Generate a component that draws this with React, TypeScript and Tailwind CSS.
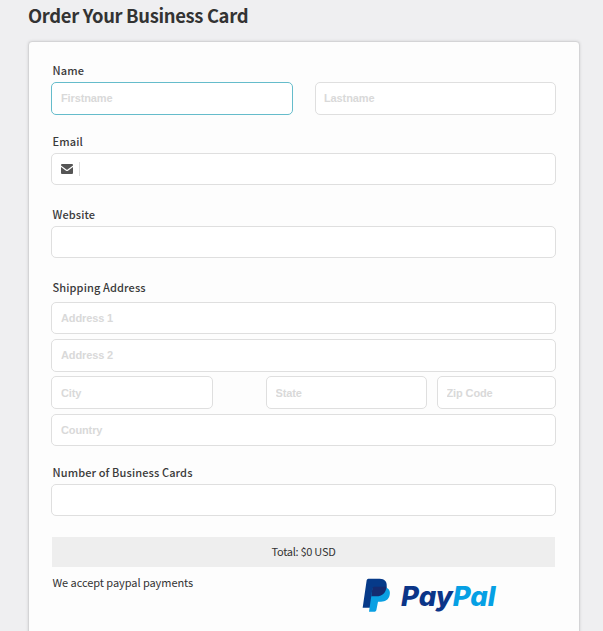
import { clsx } from "clsx";

const sans = "font-['Noto_Sans_CJK_JP',sans-serif]";

function Label({ text, className }: { text: string; className?: string }) {
  return (
    <div className={clsx(sans, "h-5 pl-[1.5px] text-[11px] leading-[18px] font-medium tracking-[0.12px] whitespace-nowrap text-[#3a3a3a]", className)}>
      {text}
    </div>
  );
}

function Field({ placeholder, className }: { placeholder?: string; className?: string }) {
  return (
    <input
      placeholder={placeholder}
      className={clsx(
        "block min-w-0 rounded-[5px] border bg-white font-['Liberation_Sans',Arial,sans-serif] text-[11px] font-bold tracking-[-0.12px] text-[#333] outline-none placeholder:text-[#d9d9d9] placeholder:opacity-100",
        className
      )}
    />
  );
}

function PayPalLogo() {
  return (
    <svg viewBox="36 54 405 105" className="h-[35px] w-[135px]" aria-label="PayPal">
      <path d="M55 56H89C104 56 112 65 110 80C107 100 96 109 79 109H69L64 143H38L50 61Q51 56 55 56Z" fill="#063a89" />
      <path d="M109 83C119 87 121 95 119 105C116 119 106 125 93 125H84L79 151Q78 155 74 155H57L67 87Q68 83 72 83Z" fill="#0aa0e3" />
      <path d="M72 80H110C107 100 96 109 79 109H64L67 85Q68 80 72 80Z" fill="#152b70" />
      <text
        x="153"
        y="138"
        fontSize="80"
        fontFamily="Inter, sans-serif"
        fontWeight="800"
        fontStyle="italic"
        textLength="284"
        lengthAdjust="spacingAndGlyphs"
        fill="#0b3588"
        className="[font-feature-settings:'cv11','ss01']"
      >
        Pay<tspan fill="#06a0e4">Pal</tspan>
      </text>
    </svg>
  );
}

export default function App() {
  return (
    <main className="h-[631px] overflow-hidden bg-[#efeff1]">
      <h1 className={clsx(sans, "h-[41px] pl-7 text-[18.4px] leading-[31px] font-bold tracking-[-0.33px] whitespace-nowrap text-[#333]")}>
        Order Your Business Card
      </h1>
      <section className="ml-7 h-[640px] w-[552px] rounded-[4px] border border-[#d4d4d6] bg-[#fdfdfd] px-[22px] pt-[19px] shadow-[0_0_3px_rgba(0,0,0,0.12)]">
        <div className="w-[505px]">
          <Label text="Name" />
          <div className="mt-px flex justify-between">
            <Field placeholder="Firstname" className="h-[33px] w-[242px] border-[#65bccb] px-[9px] pb-[2px]" />
            <Field placeholder="Lastname" className="h-[33px] w-[241px] border-[#dfdfdf] px-2 pb-[2px]" />
          </div>

          <Label text="Email" className="mt-[17px]" />
          <div className="mt-px flex h-8 items-center rounded-[5px] border border-[#dfdfdf] bg-white pl-[9px]">
            <svg viewBox="0 0 12 10" className="h-[10px] w-3">
              <path d="M1 0H11Q12 0 12 1V1.6L6.6 5.6Q6 6 5.4 5.6L0 1.6V1Q0 0 1 0Z" fill="#555" />
              <path d="M0 3L5 6.7Q6 7.3 7 6.7L12 3V9Q12 10 11 10H1Q0 10 0 9Z" fill="#555" />
            </svg>
            <span className="ml-[6px] h-[14px] w-px bg-[#dcdcdc]" />
          </div>

          <Label text="Website" className="mt-5" />
          <Field className="mt-px h-8 w-full border-[#dfdfdf]" />

          <Label text="Shipping Address" className="mt-5" />
          <div className="mt-1 flex flex-col">
            <Field placeholder="Address 1" className="h-8 w-full border-[#dfdfdf] px-[9px]" />
            <Field placeholder="Address 2" className="mt-[5px] h-[33px] w-full border-[#dfdfdf] px-[9px] pb-[2px]" />
            <div className="mt-1 flex">
              <Field placeholder="City" className="h-[33px] w-[162px] border-[#dfdfdf] px-[9px]" />
              <Field placeholder="State" className="ml-[53px] h-[33px] w-[161px] border-[#dfdfdf] px-[8.5px]" />
              <Field placeholder="Zip Code" className="ml-[10px] h-[33px] w-[119px] border-[#dfdfdf] px-[8.5px]" />
            </div>
            <Field placeholder="Country" className="mt-[5px] h-8 w-full border-[#dfdfdf] px-[9px]" />
          </div>

          <Label text="Number of Business Cards" className="mt-[17px]" />
          <Field className="mt-px h-8 w-full border-[#dfdfdf]" />

          <div className={clsx(sans, "mx-px mt-[21px] h-[30px] bg-[#eee] text-center text-[11px] leading-[28px] tracking-[-0.28px] text-[#333]")}>
            Total: $0 USD
          </div>
          <div className="flex">
            <p className={clsx(sans, "mt-[6px] h-5 w-[311px] pl-[1.5px] text-[11px] leading-[18px] tracking-[-0.06px] whitespace-nowrap text-[#333]")}>
              We accept paypal payments
            </p>
            <div className="mt-[11px]">
              <PayPalLogo />
            </div>
          </div>
        </div>
      </section>
    </main>
  );
}
